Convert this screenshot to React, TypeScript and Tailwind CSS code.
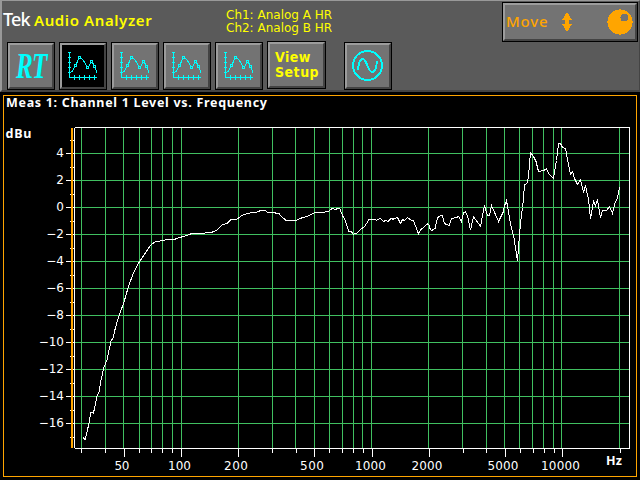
import React from "react";

const FREQ_LINES = [
  81, 105, 123, 139, 151, 162, 172, 181, 238, 272, 295, 314, 329, 342, 353, 362,
  371, 428, 462, 486, 504, 519, 532, 543, 553, 561, 619,
];

const MINOR_TICKS = [
  81, 105, 139, 151, 162, 172, 272, 296, 329, 342, 353, 363, 463, 486, 520, 533,
  544, 554, 620,
];

const MAJOR_TICKS = [
  { x: 124, label: "50", start: 114.5, width: 15 },
  { x: 181, label: "100", start: 168, width: 23 },
  { x: 238, label: "200", start: 224, width: 24 },
  { x: 314, label: "500", start: 300, width: 24 },
  { x: 372, label: "1000", start: 355, width: 31 },
  { x: 429, label: "2000", start: 411.5, width: 31 },
  { x: 505, label: "5000", start: 487.5, width: 31 },
  { x: 562, label: "10000", start: 541, width: 39 },
];

const LEVELS = [4, 2, 0, -2, -4, -6, -8, -10, -12, -14, -16];

const TRACE =
  "83,437 85,440 87,432 89,423 91,412 93.5,413 97,396 99,392 101,380 104,367 107,360 111,341 113,338 115.6,327 119,316 121.5,309 124,302 128,288 133,274 139,262.5 143,256.5 148,249 151,245 155,242 160,241 167,239.5 175,239.2 178,238 185,236 192,233.5 201,233.5 212,232.2 217,230 222,225 227,223.5 231,219.5 237,219.2 241,216 245,214.3 252,212.6 257,212 261,210.4 265,210.4 267,212 273,212.6 279,213.6 282,217 286,220.4 296,220.4 300,218.4 307,216.6 315,212.6 325,212 329,211 332,208.5 335.5,209.6 337.5,208.5 340,209 342.5,215.5 345.5,221 348.5,231 351.5,231.6 353,234.2 356.5,233.6 360,230 365,226 369,219.4 375,219.4 376.5,220.4 380,218.4 383.5,221.4 386,220.4 388,221.4 391,218.4 393,219.2 397.5,217.5 400.5,223.4 402.5,219.6 404.5,220.4 407.5,217.5 411.5,220.6 413.5,220.8 418.5,233.8 421,229.6 427.5,224 429,225 429.8,228.4 431.5,230.6 435,228.5 437.5,217.6 441,215.6 442.5,215.8 444.5,223.6 449,225.5 451.5,218.5 456.5,217.5 458.5,216.5 461.5,221.5 463.5,212.5 465.5,212 467.5,215.6 470.5,230.4 473.5,216.6 480.5,226.4 484.5,205.5 487.5,215.6 489.5,215.6 491.5,205.5 498.5,221.5 503,212.5 504.5,206 506.5,200.5 510.5,224 514,238 517.5,261 519.5,235 520.5,223 522.5,207.5 523.5,198 524.5,184.5 527.5,183.5 529,170 530.5,152.5 533.5,156.5 536,161.5 538.5,171.5 544,170.5 546.5,168.5 548.5,173.5 553.5,178.5 556.5,160.5 558.5,143.5 560.5,143.5 562.5,147.5 565.5,148.5 568.5,164.5 570.5,174.5 572.5,171.5 574.5,178.5 577.5,184.5 580.5,179.5 583.5,192.5 585.5,185.5 588.5,199.5 590.5,218.5 593.5,201.5 595.5,205.5 597.5,199.5 600.5,217.5 602.5,210.5 606.5,210.5 609.5,206.5 612.5,213.5 614.5,204.5 617.5,197.5 619.5,187.5";

function Panel({
  className,
  pressed = false,
  children,
}: {
  className: string;
  pressed?: boolean;
  children: React.ReactNode;
}) {
  return (
    <div className={`shrink-0 border border-black ${className}`}>
      <div
        className={`flex h-full w-full items-center border-2 border-t-[#9c9c9c] border-l-[#9c9c9c] border-r-[#434343] border-b-[#434343] ${
          pressed ? "bg-black" : "bg-[#737373]"
        }`}
      >
        {children}
      </div>
    </div>
  );
}

function GraphIcon() {
  return (
    <svg
      width="42"
      height="42"
      viewBox="3 3 42 42"
      fill="none"
      stroke="#00ffff"
      shapeRendering="crispEdges"
    >
      <path d="M10.5 10V36M9 10.5H12M9 15.5H12M9 20.5H12M9 25.5H12M9 30.5H12" />
      <path d="M10 35.5H38M15.5 33V38M20.5 33V38M25.5 33V38M30.5 33V38M35.5 33V38" />
      <path d="M12.5 30.5L15.5 25M17.5 22L19.5 16.5M21.5 15.5L24.5 18.5L28 24.5M29.5 24.5L32 20.5M33.5 20.5L35 23.5M36 25.5L38 31" />
      <path d="M15.5 22.5h2v2h-2zM19.5 14.5h2v2h-2zM27.5 24.5h2v2h-2zM31.5 18.5h2v2h-2zM34.5 23.5h2v2h-2z" />
    </svg>
  );
}

function SineIcon() {
  return (
    <svg
      width="42"
      height="42"
      viewBox="3 3 42 42"
      fill="none"
      stroke="#00ffff"
      strokeWidth="2"
      shapeRendering="crispEdges"
    >
      <circle cx="23.5" cy="23.5" r="14.5" />
      <path d="M14 28C14.5 22 16 17 18.7 17C23 17 23.5 30 28.3 30C31.5 30 32.5 25 33 19" />
    </svg>
  );
}

function Toolbar() {
  return (
    <header className="flex h-[92px] justify-between border-t border-r border-b-2 border-l-2 border-t-[#999] border-r-[#444] border-b-[#444] border-l-[#999] bg-[#5a5a5a]">
      <div className="flex flex-col">
        <div className="flex h-10 pl-px">
          <div className="w-[31px] pt-[6px] font-['Noto_Sans'] text-[18px] leading-6 font-medium tracking-[-0.8px] text-white">
            Tek
          </div>
          <h1 className="w-48 pt-[9px] font-['Noto_Sans'] text-[15px] leading-5 font-semibold tracking-[0.6px] text-[#ffff00]">
            Audio Analyzer
          </h1>
          <div className="pt-[8px] font-['DejaVu_Sans'] text-[12px] leading-[13px] whitespace-nowrap text-[#ffff00]">
            <div>Ch1: Analog A HR</div>
            <div>Ch2: Analog B HR</div>
          </div>
        </div>
        <div className="flex gap-1 pt-px pl-[5px]">
          <Panel className="h-12 w-12">
            <span className="w-full pt-[2px] pr-[2px] text-center font-['Liberation_Serif'] text-[35px] leading-[40px] font-bold text-[#00ffff] italic">
              <span className="inline-block scale-x-[0.72] tracking-[-1px]">RT</span>
            </span>
          </Panel>
          <Panel className="h-12 w-12" pressed>
            <GraphIcon />
          </Panel>
          <Panel className="h-12 w-12">
            <GraphIcon />
          </Panel>
          <Panel className="h-12 w-12">
            <GraphIcon />
          </Panel>
          <Panel className="h-12 w-12">
            <GraphIcon />
          </Panel>
          <Panel className="-mt-px h-12 w-[59px]">
            <div className="flex flex-col pl-[5px] font-['DejaVu_Sans_Condensed','DejaVu_Sans'] text-[14px] leading-[15px] font-bold tracking-[0.5px] text-[#ffff00]">
              <span>View</span>
              <span>Setup</span>
            </div>
          </Panel>
          <Panel className="ml-[14px] h-12 w-12">
            <SineIcon />
          </Panel>
        </div>
      </div>
      <Panel className="mt-px mr-px h-10 w-[136px]">
        <span className="w-[57px] pb-[3px] pl-px font-['Noto_Sans'] text-[15px] leading-5 font-medium tracking-[0.8px] text-[#ffa500]">
          Move
        </span>
        <svg width="10" height="20" viewBox="0 0 10 20" fill="#ffa500" shapeRendering="crispEdges">
          <path d="M5 0L10 8H7V12H10L5 20L0 12H3V8H0Z" />
        </svg>
        <svg className="ml-auto mr-[2px]" width="26" height="26" viewBox="0 0 26 26" shapeRendering="crispEdges">
          <circle cx="13" cy="13" r="12.6" fill="#ffa500" />
          <circle cx="17.5" cy="8.5" r="4" fill="#737373" />
        </svg>
      </Panel>
    </header>
  );
}

function Chart() {
  return (
    <svg
      className="font-['DejaVu_Sans']"
      width="632"
      height="364"
      viewBox="4 112 632 364"
      fill="#fff"
      fontSize="12"
    >
      <g stroke="#40bf60" shapeRendering="crispEdges">
        {FREQ_LINES.map((x) => (
          <path key={x} d={`M${x + 0.5} 128V448`} />
        ))}
        {LEVELS.map((level) => (
          <path key={level} d={`M75 ${207.5 - level * 13.5}H629`} />
        ))}
      </g>

      <g stroke="#fff" fill="none" shapeRendering="crispEdges">
        <path d="M74.5 128V448M75 127.5H629.5V448.5H75" />
        {LEVELS.map((level) => (
          <path key={level} d={`M66 ${207.5 - level * 13.5}H74`} />
        ))}
        {LEVELS.map((level) => (
          <path key={level} d={`M70 ${194.5 - level * 13.5}H74`} />
        ))}
        <path d="M70 437.5H74" />
        {MINOR_TICKS.map((x) => (
          <path key={x} d={`M${x + 0.5} 449V453`} />
        ))}
        {MAJOR_TICKS.map(({ x }) => (
          <path key={x} d={`M${x + 0.5} 449V457`} />
        ))}
        <polyline points={TRACE} />
      </g>
      <rect x="71" y="128" width="2" height="320" fill="#ffa500" />

      {LEVELS.map((level) => (
        <text key={level} x="64" y={211 - level * 13.5} textAnchor="end">
          {level < 0 ? `−${-level}` : level}
        </text>
      ))}
      {MAJOR_TICKS.map(({ label, start, width }) => (
        <text key={label} x={start} y="470" textLength={width}>
          {label}
        </text>
      ))}
      <g className="font-['Noto_Sans']" fontSize="12.5" fontWeight="bold">
        <text x="5.5" y="138" textLength="26">
          dBu
        </text>
        <text x="606" y="465" textLength="16">
          Hz
        </text>
      </g>
    </svg>
  );
}

function App() {
  return (
    <div className="flex h-[480px] w-[640px] flex-col overflow-hidden bg-black">
      <Toolbar />
      <main className="mt-[3px] ml-[3px] flex h-[382px] w-[634px] flex-col border border-[#ffa500]">
        <h2 className="h-4 pl-[2px] font-['Noto_Sans'] text-[12.5px] leading-[14px] font-bold tracking-[0.7px] whitespace-nowrap text-white">
          Meas 1: Channel 1 Level vs. Frequency
        </h2>
        <Chart />
      </main>
    </div>
  );
}

export default App;
